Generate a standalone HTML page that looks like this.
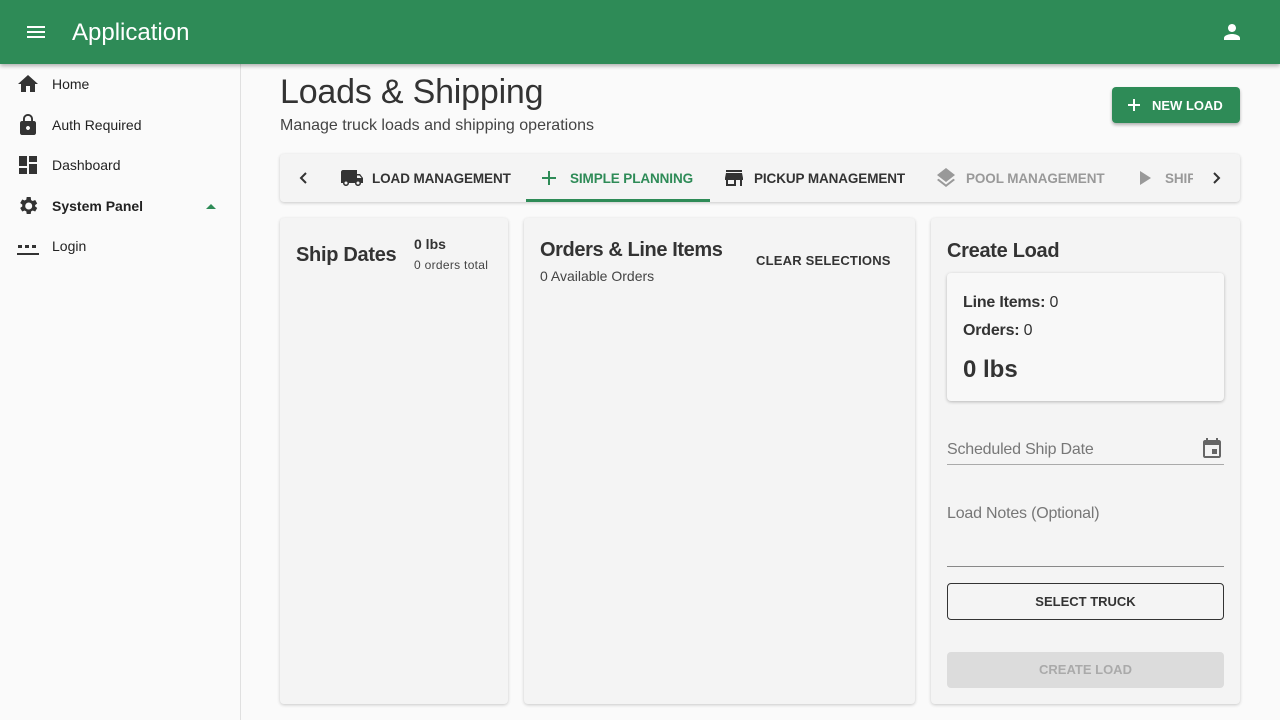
<!DOCTYPE html>
<html><head><style>
*{box-sizing:border-box;margin:0;padding:0}
body{width:1280px;height:720px;overflow:hidden;background:#fafafa;font-family:"Liberation Sans",Roboto,sans-serif;color:#333;position:relative}
.top{position:absolute;left:0;top:0;width:1280px;height:64px;background:#2e8b57;box-shadow:0 2px 4px rgba(0,0,0,.3);z-index:2}
.top .t{position:absolute;left:72px;top:19px;font-size:24px;color:#fff}
.side{position:absolute;left:0;top:64px;width:241px;height:656px;border-right:1px solid #e0e0e0;background:#fafafa}
.item{position:absolute;left:0;height:40px;width:240px;font-size:14px;color:#222}
.item svg{position:absolute;left:16px;top:8px}
.item span{position:absolute;left:52px;top:12px}
.card{position:absolute;background:#f4f4f4;border-radius:4px;box-shadow:0 1px 3px rgba(0,0,0,.2)}
.tab{position:absolute;top:171px;font-size:13.5px;font-weight:bold;letter-spacing:-.1px}
svg{display:block}
</style></head><body>
<div class="top">
<svg style="position:absolute;left:24px;top:20px" width="24" height="24" viewBox="0 0 24 24"><path fill="#fff" d="M3 18h18v-2H3v2zm0-5h18v-2H3v2zm0-7v2h18V6H3z"/></svg>
<div class="t">Application</div>
<svg style="position:absolute;left:1220px;top:20px" width="24" height="24" viewBox="0 0 24 24"><path fill="#fff" d="M12 12c2.2 0 4-1.8 4-4s-1.8-4-4-4-4 1.8-4 4 1.8 4 4 4zm0 2c-2.7 0-8 1.3-8 4v2h16v-2c0-2.7-5.3-4-8-4z"/></svg>
</div>
<div class="side">
<div class="item" style="top:0"><svg width="24" height="24" viewBox="0 0 24 24"><path fill="#333" d="M10 20v-6h4v6h5v-8h3L12 3 2 12h3v8z"/></svg><span>Home</span></div>
<div class="item" style="top:41px"><svg width="24" height="24" viewBox="0 0 24 24"><path fill="#333" d="M18 8h-1V6c0-2.8-2.2-5-5-5S7 3.2 7 6v2H6c-1.1 0-2 .9-2 2v10c0 1.1.9 2 2 2h12c1.1 0 2-.9 2-2V10c0-1.1-.9-2-2-2zm-6 9c-1.1 0-2-.9-2-2s.9-2 2-2 2 .9 2 2-.9 2-2 2zm3.1-9H8.9V6c0-1.7 1.4-3.1 3.1-3.1s3.1 1.4 3.1 3.1v2z"/></svg><span>Auth Required</span></div>
<div class="item" style="top:81px"><svg width="24" height="24" viewBox="0 0 24 24"><path fill="#333" d="M3 13h8V3H3v10zm0 8h8v-6H3v6zm10 0h8V11h-8v10zm0-18v6h8V3h-8z"/></svg><span>Dashboard</span></div>
<div class="item" style="top:122px"><svg width="24" height="24" viewBox="0 0 24 24"><path fill="#333" d="M19.1 12.9a7 7 0 000-1.8l2.1-1.6-2-3.5-2.5 1a7 7 0 00-1.6-.9L14.7 3h-4l-.4 2.6a7 7 0 00-1.6.9l-2.5-1-2 3.5 2.1 1.6a7 7 0 000 1.8l-2.1 1.6 2 3.5 2.5-1c.5.4 1 .7 1.6.9l.4 2.6h4l.4-2.6c.6-.2 1.1-.5 1.6-.9l2.5 1 2-3.5-2.1-1.6zM12.7 15.5a3.5 3.5 0 110-7 3.5 3.5 0 010 7z"/></svg><span style="font-weight:bold">System Panel</span><svg style="left:206px;top:18px" width="10" height="5"><path fill="#2e8b57" d="M0 5L5 0l5 5z"/></svg></div>
<div class="item" style="top:162px"><svg width="24" height="24" viewBox="0 0 24 24"><path fill="#333" d="M1 19h22v2H1zM2 11h4v3H2zM9 11h4v3H9zM16 11h4v3h-4z"/></svg><span>Login</span></div>
</div>
<div style="position:absolute;left:280px;top:73px;font-size:34px;color:#333;letter-spacing:-.2px">Loads &amp; Shipping</div>
<div style="position:absolute;left:280px;top:117px;font-size:16px;color:#444">Manage truck loads and shipping operations</div>
<div style="position:absolute;left:1112px;top:87px;width:128px;height:36px;background:#2e8b57;border-radius:4px;box-shadow:0 2px 3px rgba(0,0,0,.3);color:#fff;font-size:13px;font-weight:bold"><svg style="position:absolute;left:14px;top:10px" width="16" height="16" viewBox="0 0 16 16"><path stroke="#fff" stroke-width="2" d="M8 2v12M2 8h12"/></svg><span style="position:absolute;left:40px;top:11px">NEW LOAD</span></div>
<div class="card" style="left:280px;top:154px;width:960px;height:48px"></div>
<svg style="position:absolute;left:296px;top:170px" width="16" height="16" viewBox="0 0 16 16"><path stroke="#333" stroke-width="2" fill="none" d="M10 3L5 8l5 5"/></svg>
<svg style="position:absolute;left:1208px;top:170px" width="16" height="16" viewBox="0 0 16 16"><path stroke="#333" stroke-width="2" fill="none" d="M6 3l5 5-5 5"/></svg>
<svg style="position:absolute;left:340px;top:166px" width="24" height="24" viewBox="0 0 24 24"><path fill="#333" d="M20 8h-3V4H3c-1.1 0-2 .9-2 2v11h2c0 1.7 1.3 3 3 3s3-1.3 3-3h6c0 1.7 1.3 3 3 3s3-1.3 3-3h2v-5l-3-4zM6 18.5a1.5 1.5 0 110-3 1.5 1.5 0 010 3zm13.5-9 2 2.5H17V9.5h2.5zM18 18.5a1.5 1.5 0 110-3 1.5 1.5 0 010 3z"/></svg>
<div class="tab" style="left:372px;color:#333">LOAD MANAGEMENT</div>
<svg style="position:absolute;left:541px;top:170px" width="16" height="16" viewBox="0 0 16 16"><path stroke="#2e8b57" stroke-width="2" d="M8 1v14M1 8h14"/></svg>
<div class="tab" style="left:570px;color:#2e8b57">SIMPLE PLANNING</div>
<div style="position:absolute;left:526px;top:199px;width:184px;height:3px;background:#2e8b57"></div>
<svg style="position:absolute;left:722px;top:166px" width="24" height="24" viewBox="0 0 24 24"><path fill="#333" d="M20 4H4v2h16V4zm1 10v-2l-1-5H4l-1 5v2h1v6h10v-6h4v6h2v-6h1zm-9 4H6v-4h6v4z"/></svg>
<div class="tab" style="left:754px;color:#333">PICKUP MANAGEMENT</div>
<svg style="position:absolute;left:934px;top:166px" width="24" height="24" viewBox="0 0 24 24"><path fill="#999" d="M12 18.5l-7.4-5.7L3 14l9 7 9-7-1.6-1.3zM12 16l7.4-5.7L21 9l-9-7-9 7 1.6 1.3z"/></svg>
<div class="tab" style="left:966px;color:#999">POOL MANAGEMENT</div>
<svg style="position:absolute;left:1136px;top:168px" width="20" height="20" viewBox="0 0 20 20"><path fill="#999" d="M4 3v14l11-7z"/></svg>
<div class="tab" style="left:1165px;color:#999;width:28px;overflow:hidden">SHIPPING</div>
<div class="card" style="left:280px;top:218px;width:228px;height:486px"></div>
<div style="position:absolute;left:296px;top:244px;font-size:20px;font-weight:bold;color:#333;letter-spacing:-.3px">Ship Dates</div>
<div style="position:absolute;left:414px;top:236px;font-size:14px;font-weight:bold;color:#333">0 lbs</div>
<div style="position:absolute;left:414px;top:258px;font-size:12px;color:#444;letter-spacing:.3px">0 orders total</div>
<div class="card" style="left:524px;top:218px;width:391px;height:486px"></div>
<div style="position:absolute;left:540px;top:239px;font-size:20px;font-weight:bold;color:#333;letter-spacing:-.4px">Orders &amp; Line Items</div>
<div style="position:absolute;left:540px;top:268px;font-size:14px;color:#444">0 Available Orders</div>
<div style="position:absolute;left:756px;top:253px;font-size:13px;font-weight:bold;letter-spacing:.2px;color:#333">CLEAR SELECTIONS</div>
<div class="card" style="left:931px;top:218px;width:309px;height:486px"></div>
<div style="position:absolute;left:947px;top:240px;font-size:20px;font-weight:bold;color:#333;letter-spacing:-.3px">Create Load</div>
<div class="card" style="left:947px;top:273px;width:277px;height:128px;background:#f8f8f8;box-shadow:0 1px 3px rgba(0,0,0,.25)"></div>
<div style="position:absolute;left:963px;top:294px;font-size:16px;color:#333;letter-spacing:-.2px"><b>Line Items:</b> 0</div>
<div style="position:absolute;left:963px;top:322px;font-size:16px;color:#333;letter-spacing:-.2px"><b>Orders:</b> 0</div>
<div style="position:absolute;left:963px;top:356px;font-size:24px;font-weight:bold;color:#333">0 lbs</div>
<div style="position:absolute;left:947px;top:441px;font-size:16px;color:#777;letter-spacing:-.2px">Scheduled Ship Date</div>
<svg style="position:absolute;left:1200px;top:437px" width="24" height="24" viewBox="0 0 24 24"><path fill="#666" d="M17 12h-5v5h5v-5zM16 1v2H8V1H6v2H5c-1.1 0-2 .9-2 2v14c0 1.1.9 2 2 2h14c1.1 0 2-.9 2-2V5c0-1.1-.9-2-2-2h-1V1h-2zm3 18H5V8h14v11z"/></svg>
<div style="position:absolute;left:947px;top:464px;width:277px;height:1px;background:#aaa"></div>
<div style="position:absolute;left:947px;top:505px;font-size:16px;color:#777;letter-spacing:-.2px">Load Notes (Optional)</div>
<div style="position:absolute;left:947px;top:566px;width:277px;height:1px;background:#888"></div>
<div style="position:absolute;left:947px;top:583px;width:277px;height:37px;border:1px solid #333;border-radius:4px;text-align:center;line-height:35px;font-size:13px;font-weight:bold;color:#333">SELECT TRUCK</div>
<div style="position:absolute;left:947px;top:652px;width:277px;height:36px;background:#dcdcdc;border-radius:4px;text-align:center;line-height:36px;font-size:13px;font-weight:bold;color:#aaa">CREATE LOAD</div>
</body></html>
